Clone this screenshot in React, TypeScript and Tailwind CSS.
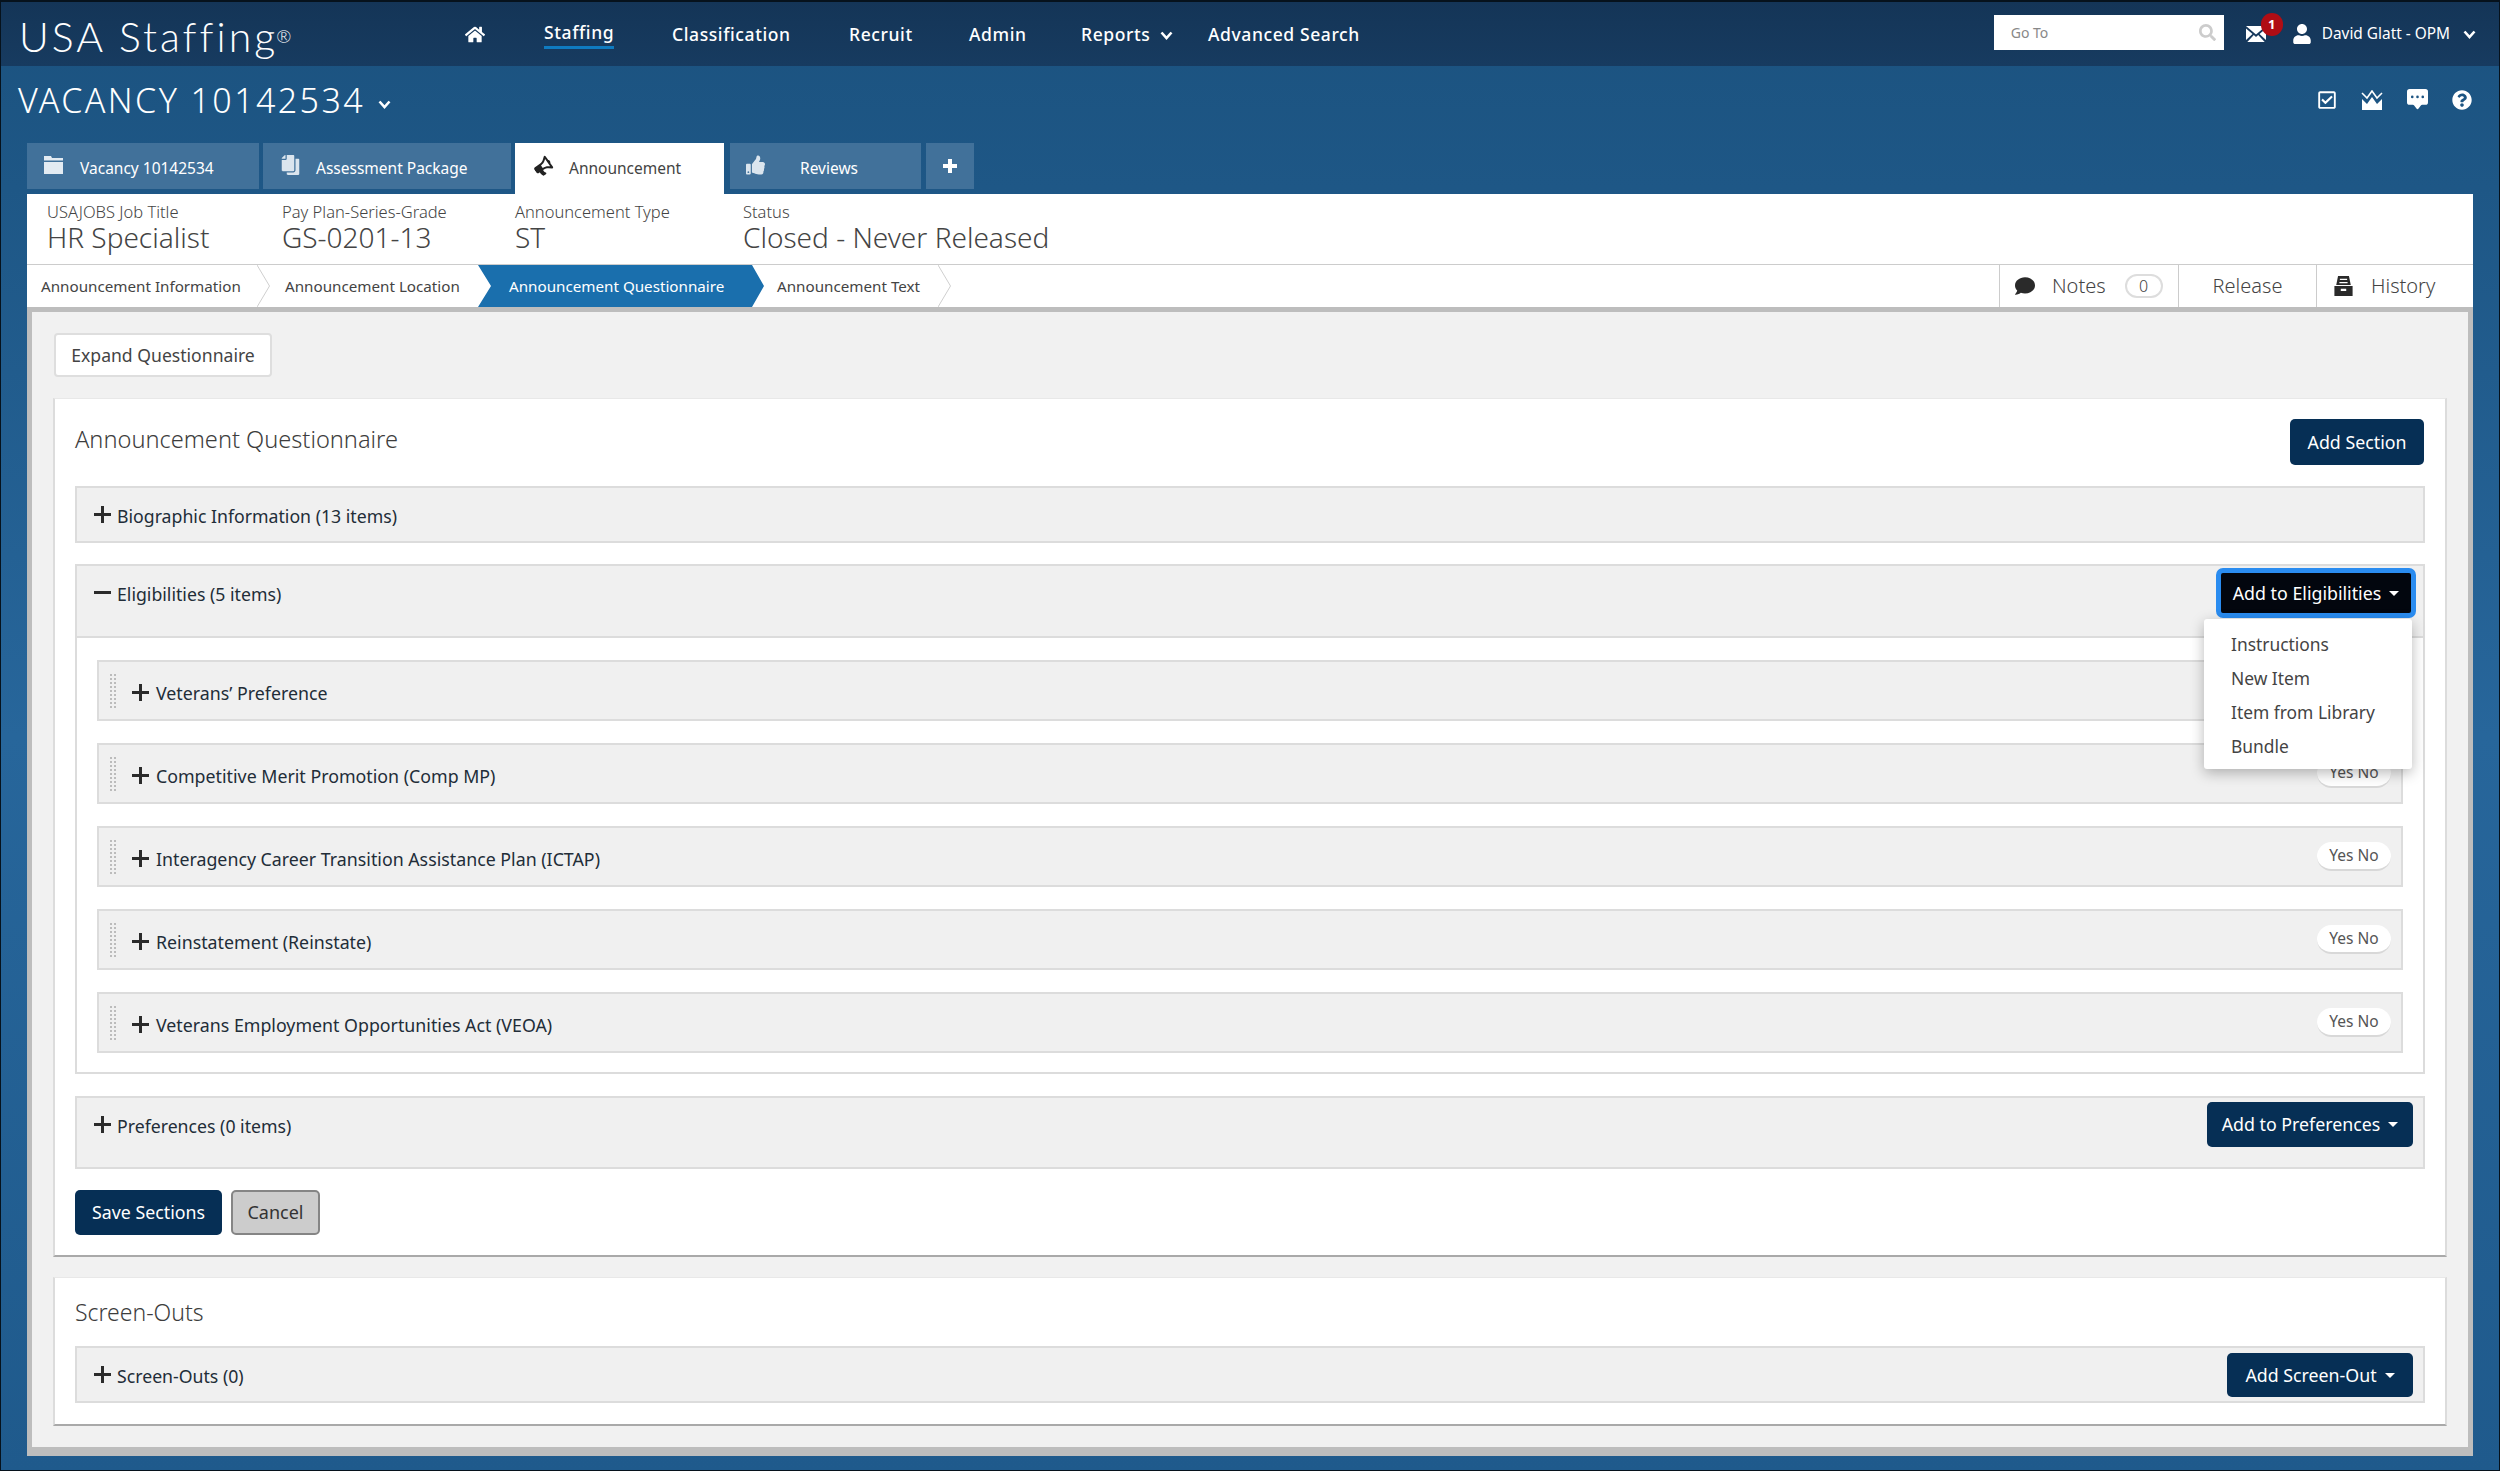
import { ReactNode } from 'react';
import { FaBullhorn, FaComment, FaCopy, FaHome, FaQuestionCircle, FaRegCheckSquare, FaSearch, FaThumbsUp, FaUser } from 'react-icons/fa';
import { BsChatSquareDotsFill } from 'react-icons/bs';

const navItems = [
  { label: 'Classification', w: 'w-[177px]' },
  { label: 'Recruit', w: 'w-[120px]' },
  { label: 'Admin', w: 'w-[112px]' },
];

function PlusMark() {
  return (
    <svg viewBox="0 0 17 17" className="mb-[3px] h-[17px] w-[17px] shrink-0 text-[#2b2b2b]">
      <path d="M7 0h3v7h7v3h-7v7H7v-7H0V7h7z" fill="currentColor" />
    </svg>
  );
}

function MinusMark() {
  return (
    <svg viewBox="0 0 17 17" className="mb-[3px] h-[17px] w-[17px] shrink-0 text-[#2b2b2b]">
      <rect x="0" y="7" width="17" height="3" fill="currentColor" />
    </svg>
  );
}

function Caret() {
  return <span className="ml-[8px] inline-block border-x-[5px] border-t-[5px] border-x-transparent border-t-white" />;
}

function DownChevron({ className }: { className: string }) {
  return (
    <svg viewBox="0 0 13 9" className={className}>
      <path d="M1.5 1.5 6.5 7l5-5.5" fill="none" stroke="currentColor" strokeWidth="2.6" />
    </svg>
  );
}

function GripDots() {
  const rows = Array.from({ length: 9 }, (_, i) => i);
  return (
    <svg viewBox="0 0 7 34" className="ml-[11px] h-[34px] w-[7px] shrink-0">
      {rows.map((i) => (
        <g key={i} fill="#bcbcbc">
          <rect x="0" y={i * 4} width="2" height="2" />
          <rect x="4" y={i * 4} width="2" height="2" />
        </g>
      ))}
    </svg>
  );
}

function DarkButton({ children, caret, className }: { children: ReactNode; caret?: boolean; className: string }) {
  return (
    <button className={`flex items-center justify-center rounded-[5px] bg-[#062f55] text-[17.8px] text-white ${className}`}>
      {children}
      {caret && <Caret />}
    </button>
  );
}

function SectionRow({ label, className, children }: { label: string; className: string; children?: ReactNode }) {
  return (
    <div className={`flex justify-between border-2 border-[#dcdcdc] bg-[#f0f0f0] ${className}`}>
      <div className="ml-[17px] mt-[18px] flex h-[20px] items-center gap-[6px] text-[17.7px] text-[#222d38]">
        <PlusMark />
        <span>{label}</span>
      </div>
      {children}
    </div>
  );
}

function EligibilityItem({ label, toggle = true }: { label: string; toggle?: boolean }) {
  return (
    <div className="flex h-[61px] shrink-0 items-center border-2 border-[#dcdcdc] bg-[#f0f0f0]">
      <GripDots />
      <div className="ml-[15px] mt-[6px] flex items-center gap-[7px] text-[17.8px] text-[#222d38]">
        <PlusMark />
        <span>{label}</span>
      </div>
      {toggle && (
        <div className="ml-auto mr-[10px] flex h-[29px] w-[74px] items-center justify-center rounded-full border-b-2 border-[#d8d8d8] bg-white text-[15.5px] text-[#555]">
          Yes No
        </div>
      )}
    </div>
  );
}

function Chevron() {
  return (
    <svg viewBox="0 0 13 42" className="ml-auto h-[42px] w-[13px] shrink-0">
      <path d="M0 0 L12.5 21 L0 42" fill="none" stroke="#cfcfcf" strokeWidth="1" />
    </svg>
  );
}

function InfoBlock({ label, value, className }: { label: string; value: string; className: string }) {
  return (
    <div className={className}>
      <div className="mt-[8px] text-[16.5px] leading-[20px] font-light text-[#444]">{label}</div>
      <div className="text-[28px] leading-[30px] font-light text-[#444]">{value}</div>
    </div>
  );
}

export default function App() {
  return (
    <div className="box-border flex h-[1471px] flex-col overflow-hidden border border-[#06121c] border-t-2 bg-linear-to-b from-[#1b527f] via-[#27669b] to-[#1f5a8c] font-['Noto_Sans',sans-serif]">
      {/* top bar */}
      <header className="flex h-[64px] shrink-0 items-center bg-linear-to-b from-[#143557] to-[#173b60] text-white">
        <div className="ml-[18px] w-[446px] pt-[5px] font-['Lato',sans-serif] text-[41px] leading-none font-light tracking-[3px]">
          USA Staffing<sup className="-ml-[2px] text-[18px] tracking-normal">®</sup>
        </div>
        <div className="w-[79px]">
          <FaHome className="h-[19px] w-[20px]" />
        </div>
        <div className="w-[128px] text-[17.5px] font-medium tracking-[0.6px]">
          <span className="inline-block border-b-[3px] border-[#0f7bc0] pb-[1px]">Staffing</span>
        </div>
        {navItems.map((item) => (
          <div key={item.label} className={`${item.w} text-[17.5px] font-medium tracking-[0.6px]`}>
            {item.label}
          </div>
        ))}
        <div className="flex w-[127px] items-center text-[17.5px] font-medium tracking-[0.6px]">
          Reports
          <DownChevron className="ml-[10px] mt-[3px] h-[9px] w-[13px]" />
        </div>
        <div className="text-[17.5px] font-medium tracking-[0.6px]">Advanced Search</div>

        <div className="ml-auto flex items-center">
          <div className="mb-[3px] flex h-[35px] w-[230px] items-center justify-between bg-white pl-[17px] pr-[8px] text-[14px] text-[#888]">
            Go To
            <FaSearch className="h-[17px] w-[17px] text-[#ccc]" />
          </div>
          <div className="relative ml-[22px] h-[16px] w-[20px]">
            <svg viewBox="0 0 20 16" className="h-[16px] w-[20px]">
              <path d="M0 0h20L10 8.5zM0 2.5 6.5 8 0 14zM20 2.5 13.5 8 20 14zM7.8 9l2.2 2 2.2-2 6.5 7H1.3z" fill="#fff" />
            </svg>
            <span className="absolute left-[15px] top-[-13px] flex h-[23px] w-[22px] items-center justify-center rounded-full bg-[#b00d14] text-[13px] font-bold">1</span>
          </div>
          <FaUser className="ml-[26px] h-[20px] w-[20px]" />
          <span className="ml-[10px] text-[15.4px]">David Glatt - OPM</span>
          <DownChevron className="ml-[13px] mr-[23px] h-[9px] w-[13px]" />
        </div>
      </header>

      {/* vacancy title */}
      <div className="flex h-[77px] shrink-0 items-start justify-between text-white">
        <div className="ml-[17px] mt-[14px] flex items-center text-[34px] leading-[40px] font-light tracking-[2.4px]">
          VACANCY 10142534
          <DownChevron className="ml-[13px] mt-[8px] h-[9px] w-[13px]" />
        </div>
        <div className="mr-[27px] mt-[23px] flex items-center gap-[24px]">
          <FaRegCheckSquare className="h-[20px] w-[20px]" />
          <svg viewBox="0 0 22 20" className="h-[20px] w-[22px]">
            <path d="M1 9l5 5 5-7 5 7 5-5v11H1z" fill="#fff" />
            <path d="M1 3l5 5 5-7 5 7 5-5" fill="none" stroke="#fff" strokeWidth="1.6" />
          </svg>
          <BsChatSquareDotsFill className="h-[21px] w-[21px]" />
          <FaQuestionCircle className="h-[20px] w-[20px]" />
        </div>
      </div>

      {/* tabs */}
      <div className="ml-[26px] flex h-[51px] shrink-0 items-start text-[15.5px] text-white">
        <div className="flex h-[46px] w-[232px] items-center bg-[#41719a] pl-[16px]">
          <svg viewBox="0 0 21 18" className="mb-[3px] h-[18px] w-[21px] text-[#e3ebf2]">
            <path d="M1 0h7l1 2h11v2.5H1zM1 6h19v12H1z" fill="currentColor" />
          </svg>
          <span className="ml-[16px] pt-[5px]">Vacancy 10142534</span>
        </div>
        <div className="ml-[4px] flex h-[46px] w-[248px] items-center bg-[#41719a] pl-[18px]">
          <FaCopy className="mb-[2px] h-[20px] w-[19px] -scale-x-100 text-[#dbe5ee]" />
          <span className="ml-[16px] pt-[5px]">Assessment Package</span>
        </div>
        <div className="ml-[4px] flex h-[51px] w-[209px] items-center bg-white pb-[5px] pl-[19px] text-[#444]">
          <FaBullhorn className="h-[17px] w-[18px] -rotate-[35deg] text-[#222]" />
          <span className="ml-[17px] pt-[5px]">Announcement</span>
        </div>
        <div className="ml-[6px] flex h-[46px] w-[191px] items-center bg-[#41719a] pl-[16px]">
          <FaThumbsUp className="mb-[2px] h-[20px] w-[19px] text-[#dbe5ee]" />
          <span className="ml-[35px] pt-[5px]">Reviews</span>
        </div>
        <div className="ml-[5px] flex h-[46px] w-[48px] items-center justify-center bg-[#41719a]">
          <svg viewBox="0 0 14 14" className="h-[14px] w-[14px]">
            <path d="M5 0h4v5h5v4H9v5H5V9H0V5h5z" fill="#fff" />
          </svg>
        </div>
      </div>

      {/* main panel */}
      <main className="mx-[26px] flex flex-col">
        <div className="flex h-[70px] bg-white pl-[20px]">
          <InfoBlock className="w-[235px]" label="USAJOBS Job Title" value="HR Specialist" />
          <InfoBlock className="w-[233px]" label="Pay Plan-Series-Grade" value="GS-0201-13" />
          <InfoBlock className="w-[228px]" label="Announcement Type" value="ST" />
          <InfoBlock className="" label="Status" value="Closed - Never Released" />
        </div>

        <div className="flex h-[43px] items-center border-t border-[#cccccc] bg-white text-[15.2px] text-[#444]">
          <div className="flex w-[243px] items-center pl-[14px]">
            Announcement Information
            <Chevron />
          </div>
          <div className="flex w-[208px] items-center pl-[15px]">Announcement Location</div>
          <div className="flex h-[42px] w-[286px] items-center bg-[#1a6fad] pl-[31px] text-white [clip-path:polygon(0_0,274px_0,286px_50%,274px_100%,0_100%,13px_50%)]">
            Announcement Questionnaire
          </div>
          <div className="flex w-[187px] items-center pl-[13px]">
            Announcement Text
            <Chevron />
          </div>
          <div className="ml-auto flex h-[42px] w-[179px] items-center border-l border-[#cccccc] pl-[15px] text-[20px] font-light">
            <FaComment className="h-[20px] w-[20px] text-[#2a2a2a]" />
            <span className="ml-[17px]">Notes</span>
            <span className="ml-[19px] flex h-[24px] w-[38px] items-center justify-center rounded-full border-2 border-[#ddd] text-[16px]">0</span>
          </div>
          <div className="flex h-[42px] w-[138px] items-center justify-center border-l border-[#cccccc] text-[20px] font-light">Release</div>
          <div className="flex h-[42px] w-[157px] items-center border-l border-[#cccccc] pl-[17px] text-[20px] font-light">
            <svg viewBox="0 0 20 22" className="h-[20px] w-[19px]">
              <path d="M4 0h12l2 10H2z M6 3v1.5h8V3z M5.5 6.5V8h9V6.5z" fill="#2a2a2a" fillRule="evenodd" />
              <path d="M0 11h20v11H0z M7 14v2.5h6V14z" fill="#2a2a2a" fillRule="evenodd" />
            </svg>
            <span className="ml-[18px]">History</span>
          </div>
        </div>

        <div className="box-border h-[1149px] border-x-[5px] border-t-[5px] border-b-[9px] border-[#bdbdbd] bg-[#f1f1f1] px-[21px] pt-[21px]">
          <button className="ml-[1px] flex h-[44px] w-[218px] items-center justify-center rounded-[4px] border-2 border-[#dedede] bg-white text-[17.6px] text-[#444]">
            Expand Questionnaire
          </button>

          {/* questionnaire card */}
          <section className="relative mt-[21px] h-[859px] border-x-2 border-t border-b-2 border-[#dcdcdc] border-t-[#e8e8e8] border-b-[#a9a9a9] bg-white px-[20px] pt-[20px]">
            <div className="flex h-[46px] items-center justify-between">
              <h2 className="mb-[4px] text-[23.6px] font-light text-[#3d3d3d]">Announcement Questionnaire</h2>
              <DarkButton className="mr-[1px] h-[46px] w-[134px]">Add Section</DarkButton>
            </div>

            <SectionRow label="Biographic Information (13 items)" className="mt-[21px] h-[57px]" />

            <div className="mt-[21px] flex h-[74px] justify-between border-2 border-[#dcdcdc] bg-[#f0f0f0]">
              <div className="ml-[17px] mt-[18px] flex h-[20px] items-center gap-[6px] text-[17.7px] text-[#222d38]">
                <MinusMark />
                <span>Eligibilities (5 items)</span>
              </div>
              <div className="relative mr-[7px] mt-[2px] h-[50px]">
                <DarkButton caret className="box-border h-[50px] w-[200px] rounded-[7px] border-[5px] border-[#2a8cf0] !bg-[#02060e]">
                  Add to Eligibilities
                </DarkButton>
                <div className="absolute right-[4px] top-[51px] z-10 flex h-[150px] w-[208px] flex-col rounded-[3px] bg-white pl-[27px] pt-[7px] text-[17.4px] text-[#444] shadow-[0_4px_14px_rgba(0,0,0,0.28)]">
                  <span className="h-[34px] leading-[36px]">Instructions</span>
                  <span className="h-[34px] leading-[36px]">New Item</span>
                  <span className="h-[34px] leading-[36px]">Item from Library</span>
                  <span className="h-[34px] leading-[36px]">Bundle</span>
                </div>
              </div>
            </div>

            <div className="flex h-[436px] flex-col gap-[22px] border-x-2 border-b-2 border-[#dcdcdc] px-[20px] pt-[22px]">
              <EligibilityItem label="Veterans’ Preference" toggle={false} />
              <EligibilityItem label="Competitive Merit Promotion (Comp MP)" />
              <EligibilityItem label="Interagency Career Transition Assistance Plan (ICTAP)" />
              <EligibilityItem label="Reinstatement (Reinstate)" />
              <EligibilityItem label="Veterans Employment Opportunities Act (VEOA)" />
            </div>

            <SectionRow label="Preferences (0 items)" className="mt-[22px] h-[73px]">
              <DarkButton caret className="mr-[10px] mt-[4px] h-[45px] w-[206px]">Add to Preferences</DarkButton>
            </SectionRow>

            <div className="mt-[21px] flex gap-[9px]">
              <DarkButton className="h-[45px] w-[147px]">Save Sections</DarkButton>
              <button className="h-[45px] w-[89px] rounded-[5px] border-2 border-[#858585] bg-[#cccccc] text-[18px] text-[#333]">Cancel</button>
            </div>
          </section>

          {/* screen-outs card */}
          <section className="mt-[20px] h-[149px] border-x-2 border-t border-b-2 border-[#dcdcdc] border-t-[#e8e8e8] border-b-[#a9a9a9] bg-white px-[20px] pt-[20px]">
            <h2 className="h-[48px] text-[23px] leading-[28px] font-light text-[#3d3d3d]">Screen-Outs</h2>
            <SectionRow label="Screen-Outs (0)" className="h-[57px]">
              <DarkButton caret className="mr-[10px] mt-[5px] h-[44px] w-[186px]">Add Screen-Out</DarkButton>
            </SectionRow>
          </section>
        </div>
      </main>
    </div>
  );
}
